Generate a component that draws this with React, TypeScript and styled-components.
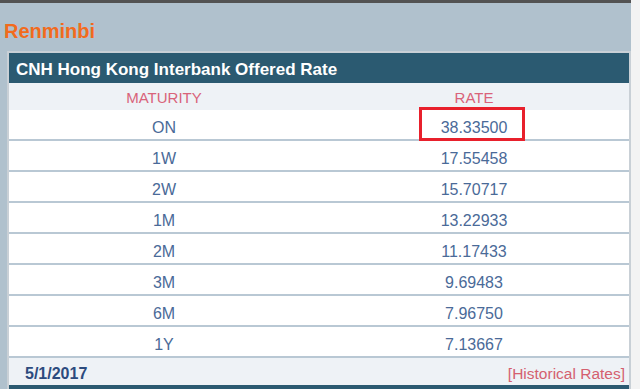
import React from "react";
import styled, { createGlobalStyle } from "styled-components";

const Global = createGlobalStyle`
  html, body { margin: 0; padding: 0; background: #f3f3f3; }
  body { font-family: "Liberation Sans", Arial, sans-serif; }
`;

const Page = styled.div`
  width: 631px;
  background: #b0c1cd;
  border-top: 3px solid #535353;
`;

const Title = styled.h2`
  margin: 0;
  height: 48px;
  box-sizing: border-box;
  padding: 17px 0 0 4px;
  font-size: 20px;
  line-height: 23px;
  font-weight: bold;
  color: #f26b1d;
`;

const Panel = styled.div`
  margin-left: 7px;
  border: 2px solid #c9d0d6;
  border-bottom: none;
  background: #ffffff;
`;

const Header = styled.div`
  height: 30px;
  box-sizing: border-box;
  padding: 7px 0 0 7px;
  background: #2b5a71;
  color: #ffffff;
  font-size: 17px;
  line-height: 20px;
  font-weight: bold;
`;

const Row = styled.div<{ $head?: boolean }>`
  display: grid;
  grid-template-columns: 1fr 1fr;
  height: ${(p) => (p.$head ? "27px" : "31px")};
  box-sizing: border-box;
  background: ${(p) => (p.$head ? "#eef2f6" : "#ffffff")};
  border-bottom: ${(p) => (p.$head ? "none" : "2px solid #b9c8d4")};
`;

const Cell = styled.div<{ $head?: boolean }>`
  position: relative;
  text-align: center;
  padding-top: ${(p) => (p.$head ? "6px" : "9px")};
  font-size: ${(p) => (p.$head ? "15px" : "16px")};
  line-height: ${(p) => (p.$head ? "17px" : "18px")};
  color: ${(p) => (p.$head ? "#d9637a" : "#4a6a98")};
`;

const Highlight = styled.div`
  position: absolute;
  left: calc(50% - 55px);
  top: -3px;
  width: 106px;
  height: 34px;
  box-sizing: border-box;
  border: 3px solid #e8202c;
`;

const Footer = styled.div`
  display: flex;
  justify-content: space-between;
  align-items: flex-start;
  height: 27px;
  box-sizing: border-box;
  padding: 7px 4px 0 16px;
  background: #eef2f6;
`;

const DateText = styled.span`
  font-size: 16px;
  line-height: 18px;
  font-weight: bold;
  color: #2c4b7e;
`;

const HistLink = styled.a`
  font-size: 15.5px;
  line-height: 18px;
  color: #d4606f;
  text-decoration: none;
`;

const BottomBar = styled.div`
  height: 6px;
  background: #2b5a71;
`;

const rows: [string, string][] = [
  ["ON", "38.33500"],
  ["1W", "17.55458"],
  ["2W", "15.70717"],
  ["1M", "13.22933"],
  ["2M", "11.17433"],
  ["3M", "9.69483"],
  ["6M", "7.96750"],
  ["1Y", "7.13667"],
];

export default function App() {
  return (
    <>
      <Global />
      <Page>
        <Title>Renminbi</Title>
        <Panel>
          <Header>CNH Hong Kong Interbank Offered Rate</Header>
          <Row $head>
            <Cell $head>MATURITY</Cell>
            <Cell $head>RATE</Cell>
          </Row>
          {rows.map(([m, r], i) => (
            <Row key={m}>
              <Cell>{m}</Cell>
              <Cell>
                {r}
                {i === 0 && <Highlight />}
              </Cell>
            </Row>
          ))}
          <Footer>
            <DateText>5/1/2017</DateText>
            <HistLink href="#">[Historical Rates]</HistLink>
          </Footer>
          <BottomBar />
        </Panel>
      </Page>
    </>
  );
}
